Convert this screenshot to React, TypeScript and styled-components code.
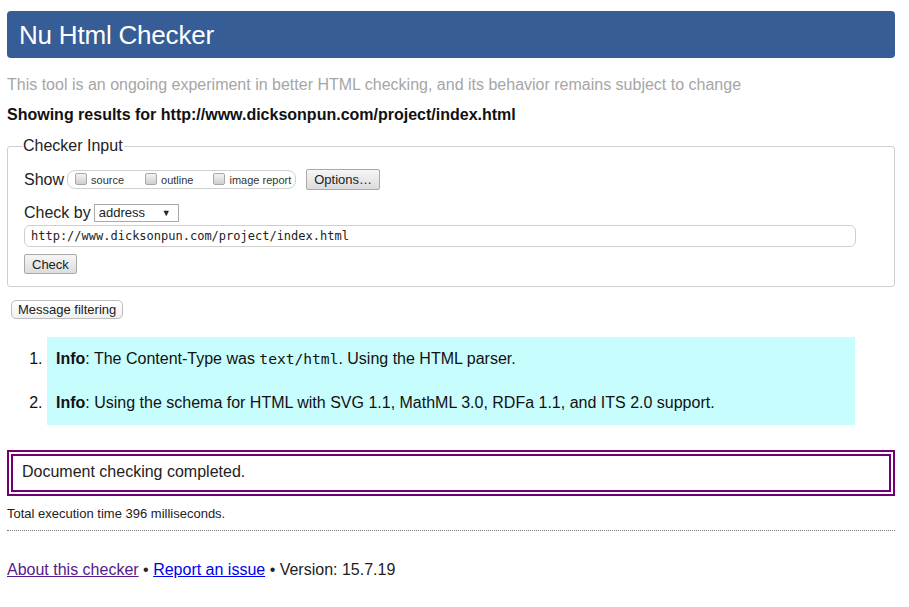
import React from "react";
import styled, { createGlobalStyle } from "styled-components";

const Global = createGlobalStyle`
  html, body { margin: 0; padding: 0; background: #fff; }
  body { font-family: "Liberation Sans", Arial, sans-serif; color: #222; }
`;

const Page = styled.div`
  width: 888px;
  margin: 0 14px 0 7px;
  padding-top: 11px;
  font-size: 16px;
`;

const Header = styled.header`
  height: 47px;
  display: flex;
  align-items: center;
  padding-left: 12px;
  padding-top: 1px;
  box-sizing: border-box;
  background: #365d95;
  border-radius: 4px;
  color: #fff;
  font-size: 26px;
  letter-spacing: -0.2px;
`;

const Subtitle = styled.p`
  margin: 17px 0 0;
  line-height: 20px;
  color: #a6a6a6;
`;

const Showing = styled.p`
  margin: 10px 0 0;
  line-height: 20px;
  font-weight: bold;
  color: #111;
`;

const Fieldset = styled.fieldset`
  margin: 11px 0 0;
  padding: 0 15px 12px 16px;
  border: 1px solid #cfcfcf;
  border-radius: 3px;
  min-width: 0;
`;

const Legend = styled.legend`
  padding: 0 1px;
  margin-left: -2px;
  line-height: 20px;
  color: #222;
`;

const Row = styled.div<{ $top: number }>`
  display: flex;
  align-items: center;
  height: 21px;
  margin-top: ${(p) => p.$top}px;
`;

const Label = styled.span`
  margin-right: 3px;
`;

const CheckGroup = styled.div`
  display: flex;
  align-items: center;
  height: 17px;
  padding: 0 4px 0 7px;
  border: 1px solid #cfcfcf;
  border-radius: 8px;
  margin-right: 10px;
`;

const CheckLabel = styled.label<{ $gap: number }>`
  display: flex;
  align-items: center;
  font-size: 11px;
  margin-right: ${(p) => p.$gap}px;
  color: #333;
`;

const Box = styled.input`
  appearance: none;
  width: 12px;
  height: 12px;
  margin: 0 4px 2px 0;
  border: 1px solid #a7a7a7;
  border-radius: 2px;
  background: linear-gradient(#f3f3f3, #cfcfcf);
`;

const Button = styled.button<{ $h: number }>`
  height: ${(p) => p.$h}px;
  padding: 0 7px;
  font-family: "Liberation Sans", Arial, sans-serif;
  font-size: 13px;
  color: #222;
  border: 1px solid #a9a9a9;
  border-radius: 2px;
  background: linear-gradient(#f6f6f6, #dcdcdc);
`;

const Select = styled.div`
  position: relative;
  width: 79px;
  height: 16px;
  padding-left: 4px;
  border: 1px solid #a9a9a9;
  font-size: 13px;
  line-height: 16px;
  box-sizing: content-box;
`;

const Arrow = styled.span`
  position: absolute;
  right: 7px;
  top: 0;
  font-size: 9px;
`;

const UrlInput = styled.div`
  width: 824px;
  height: 20px;
  margin-top: 2px;
  padding-left: 6px;
  border: 1px solid #cfcfcf;
  border-radius: 6px;
  font-family: "DejaVu Sans Mono", "Liberation Mono", monospace;
  font-size: 12px;
  line-height: 20px;
  color: #222;
`;

const CheckRow = styled.div`
  margin-top: 7px;
`;

const FilterButton = styled.button`
  margin: 13px 0 0 4px;
  height: 19px;
  padding: 0 6px;
  font-family: "Liberation Sans", Arial, sans-serif;
  font-size: 13px;
  color: #222;
  border: 1px solid #bdbdbd;
  border-radius: 5px;
  background: linear-gradient(#fff, #f0f0f0);
`;

const Messages = styled.ol`
  margin: 18px 40px 0;
  padding: 0;
  list-style: decimal outside;
`;

const Message = styled.li`
  background: #c8fdfd;
  padding: 12px 9px;
  line-height: 20px;
  color: #111;
`;

const Code = styled.code`
  font-family: "DejaVu Sans Mono", "Liberation Mono", monospace;
  font-size: 14.6px;
`;

const Success = styled.div`
  margin-top: 25px;
  border: 6px double #710074;
  padding: 5px 9px 7px;
  line-height: 22px;
  color: #222;
`;

const Timing = styled.p`
  margin: 10px 0 0;
  font-size: 13px;
  line-height: 16px;
  color: #222;
`;

const Rule = styled.hr`
  margin: 8px 0 0;
  border: 0;
  border-top: 1px dotted #777;
  height: 0;
`;

const Footer = styled.p`
  margin: 29px 0 0;
  line-height: 20px;
  color: #222;
`;

const Link = styled.a<{ $visited?: boolean }>`
  color: ${(p) => (p.$visited ? "#551a8b" : "#0000ee")};
  text-decoration: underline;
`;

export default function App() {
  return (
    <>
      <Global />
      <Page>
        <Header>Nu Html Checker</Header>
        <Subtitle>
          This tool is an ongoing experiment in better HTML checking, and its behavior remains subject to change
        </Subtitle>
        <Showing>Showing results for http://www.dicksonpun.com/project/index.html</Showing>
        <Fieldset>
          <Legend>Checker Input</Legend>
          <Row $top={13}>
            <Label>Show</Label>
            <CheckGroup>
              <CheckLabel $gap={21}>
                <Box type="checkbox" />
                source
              </CheckLabel>
              <CheckLabel $gap={20}>
                <Box type="checkbox" />
                outline
              </CheckLabel>
              <CheckLabel $gap={0}>
                <Box type="checkbox" />
                image report
              </CheckLabel>
            </CheckGroup>
            <Button $h={21}>Options…</Button>
          </Row>
          <Row $top={12}>
            <Label>Check by</Label>
            <Select>
              address
              <Arrow>▼</Arrow>
            </Select>
          </Row>
          <UrlInput>http://www.dicksonpun.com/project/index.html</UrlInput>
          <CheckRow>
            <Button $h={20}>Check</Button>
          </CheckRow>
        </Fieldset>
        <FilterButton>Message filtering</FilterButton>
        <Messages>
          <Message>
            <b>Info</b>: The Content-Type was <Code>text/html</Code>. Using the HTML parser.
          </Message>
          <Message>
            <b>Info</b>: Using the schema for HTML with SVG 1.1, MathML 3.0, RDFa 1.1, and ITS 2.0 support.
          </Message>
        </Messages>
        <Success>Document checking completed.</Success>
        <Timing>Total execution time 396 milliseconds.</Timing>
        <Rule />
        <Footer>
          <Link $visited href="#">About this checker</Link> • <Link href="#">Report an issue</Link> • Version: 15.7.19
        </Footer>
      </Page>
    </>
  );
}
